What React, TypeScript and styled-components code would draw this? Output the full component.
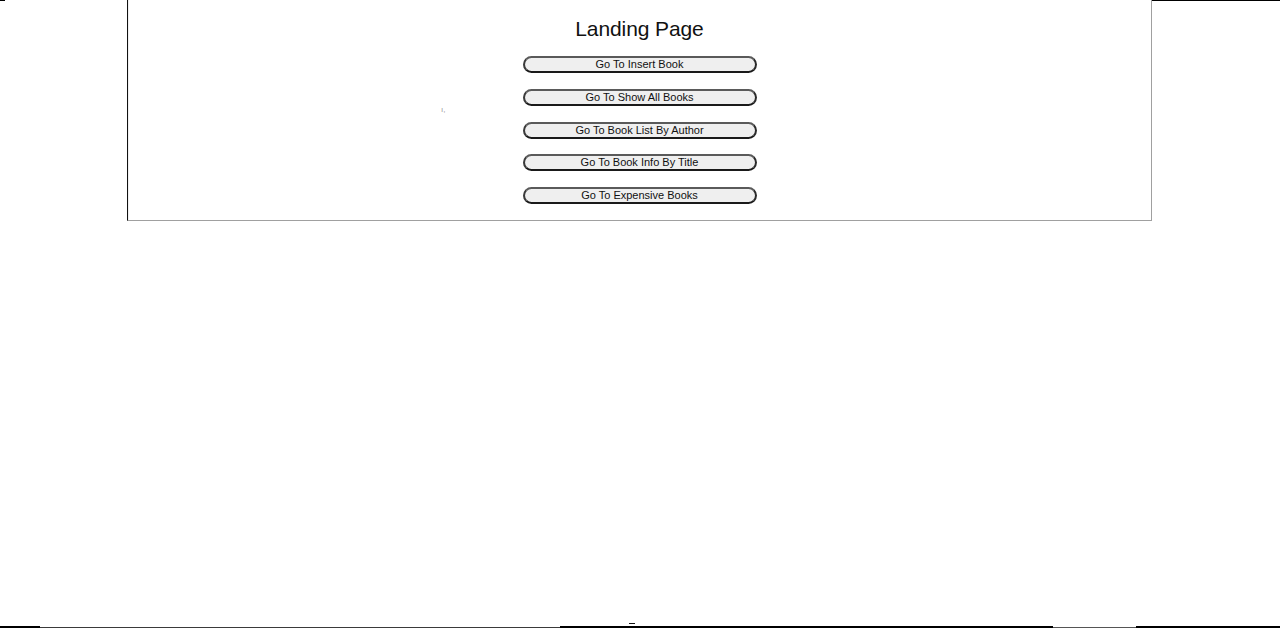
import React from "react";
import styled, { createGlobalStyle } from "styled-components";

const Global = createGlobalStyle`
  html, body { margin: 0; padding: 0; background: #ffffff; }
  body { font-family: "Liberation Sans", Arial, sans-serif; color: #000; }
`;

const Page = styled.div`
  position: relative;
  width: 1280px;
  height: 628px;
  overflow: hidden;
  background: #fff;
`;

const TopStrip = styled.div`
  position: absolute;
  left: 0;
  top: 0;
  width: 1280px;
  height: 1px;
  display: flex;
`;

const Seg = styled.div<{ $w: number; $c: string; $h?: number }>`
  width: ${(p) => p.$w}px;
  height: ${(p) => p.$h ?? 1}px;
  background: ${(p) => p.$c};
  align-self: flex-end;
  flex: none;
`;

const BottomStrip = styled.div`
  position: absolute;
  left: 0;
  bottom: 0;
  width: 1280px;
  height: 2px;
  display: flex;
`;

const Dash = styled.div`
  position: absolute;
  left: 629px;
  top: 623px;
  width: 6px;
  height: 1px;
  background: #111;
`;

const Panel = styled.main`
  box-sizing: border-box;
  width: 1025px;
  margin-left: 127px;
  height: 221px;
  border-left: 1px solid #111;
  border-right: 1px solid #a0a0a0;
  border-bottom: 1px solid #a0a0a0;
  box-shadow: inset 1px 0 0 #f0f0f0;
  display: flex;
  flex-direction: column;
  align-items: center;
  padding-top: 16px;
  position: relative;
`;

const Title = styled.h1`
  margin: 0;
  font-family: "Liberation Sans", Arial, sans-serif;
  font-weight: 400;
  font-size: 21px;
  line-height: 26px;
  letter-spacing: -0.1px;
  color: #111;
`;

const ButtonList = styled.nav`
  display: flex;
  flex-direction: column;
  align-items: center;
  gap: 15.75px;
  margin-top: 14px;
`;

const NavButton = styled.button`
  box-sizing: border-box;
  width: 234px;
  height: 17px;
  padding: 0;
  border: 2px solid;
  border-color: #5a5a5a #2a2a2a #1a1a1a #3a3a3a;
  border-radius: 9px;
  background: #efefef;
  font-family: "Liberation Sans", Arial, sans-serif;
  font-size: 11px;
  line-height: 13px;
  color: #111;
  text-align: center;
  cursor: pointer;
`;

const Stray = styled.span`
  position: absolute;
  left: 313px;
  top: 105px;
  font-size: 8px;
  color: #999;
  font-family: "Liberation Sans", Arial, sans-serif;
`;

const buttons = [
  "Go To Insert Book",
  "Go To Show All Books",
  "Go To Book List By Author",
  "Go To Book Info By Title",
  "Go To Expensive Books",
];

export default function App() {
  return (
    <>
      <Global />
      <Page>
        <TopStrip>
          <Seg $w={5} $c="#000" />
          <Seg $w={1147} $c="transparent" />
          <Seg $w={128} $c="#000" />
        </TopStrip>
        <Panel>
          <Title>Landing Page</Title>
          <Stray>ı,</Stray>
          <ButtonList>
            {buttons.map((b) => (
              <NavButton key={b}>{b}</NavButton>
            ))}
          </ButtonList>
        </Panel>
        <Dash />
        <BottomStrip>
          <Seg $w={40} $c="#000" $h={2} />
          <Seg $w={520} $c="#3a3a3a" $h={1} />
          <Seg $w={493} $c="#000" $h={2} />
          <Seg $w={83} $c="#555" $h={1} />
          <Seg $w={144} $c="#000" $h={2} />
        </BottomStrip>
      </Page>
    </>
  );
}
